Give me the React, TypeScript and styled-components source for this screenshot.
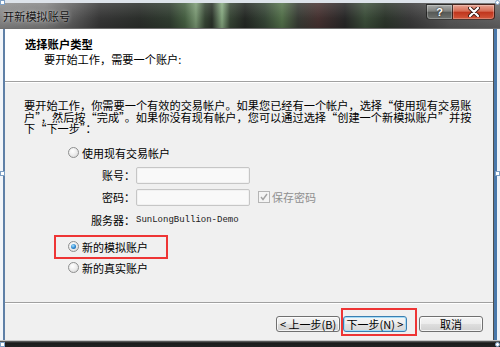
import React from "react";
import styled, { createGlobalStyle, css } from "styled-components";

const GlobalStyle = createGlobalStyle`
  html, body { margin: 0; padding: 0; }
  body {
    width: 500px;
    height: 347px;
    overflow: hidden;
    background: #ffffff;
    font-family: "Noto Sans CJK SC", "Liberation Sans", sans-serif;
  }
`;

const Page = styled.div`
  position: relative;
  width: 500px;
  height: 347px;
  display: flex;
  flex-direction: column;
  overflow: hidden;
  background: #e6ecf3;
`;

const TitleBar = styled.div`
  height: 29px;
  box-sizing: border-box;
  border-top: 3px solid #dde3ea;
  display: flex;
  justify-content: space-between;
  align-items: flex-start;
  padding: 0 5px 0 3px;
  background:
    linear-gradient(180deg, rgba(255, 255, 255, 0.12) 0%, rgba(0, 0, 0, 0.08) 60%, rgba(0, 0, 0, 0.2) 100%),
    linear-gradient(
      90deg,
      #909090 0px,
      #868686 45px,
      #5e5e5e 75px,
      #3a3a3a 100px,
      #2e322e 140px,
      #334033 170px,
      #4a6546 185px,
      #7f9e78 196px,
      #3a4a38 205px,
      #2c342b 212px,
      #8db087 222px,
      #3b4a39 230px,
      #262a26 245px,
      #3a4a3a 265px,
      #58774f 282px,
      #3b3f38 298px,
      #4a3534 318px,
      #2a2a2a 345px,
      #3f523d 365px,
      #2f392e 385px,
      #3d3d3d 410px,
      #5c5c5c 450px,
      #6a6a6a 500px
    );
  box-shadow: inset 0 -1px 0 #6f6f6f;
`;

const Title = styled.div`
  font-size: 11.2px;
  line-height: 26px;
  color: #141414;
  text-shadow: 0 0 5px rgba(255, 255, 255, 0.55), 0 0 2px rgba(255, 255, 255, 0.4);
`;

const CaptionGroup = styled.div`
  display: flex;
  margin-top: 1px;
`;

const CaptionButton = styled.div<{ $kind: "help" | "close" }>`
  height: 16px;
  box-sizing: border-box;
  display: flex;
  align-items: center;
  justify-content: center;
  border: 1px solid rgba(20, 20, 20, 0.75);
  box-shadow: inset 0 0 0 1px rgba(255, 255, 255, 0.25);
  color: #ffffff;
  font-family: "Liberation Sans", sans-serif;
  font-weight: bold;
  font-size: 11px;
  text-shadow: 0 0 2px #000;
  ${(p) =>
    p.$kind === "help"
      ? css`
          width: 26px;
          border-radius: 0 0 0 4px;
          border-right: none;
          background: linear-gradient(180deg, #a9aba9 0%, #80827f 45%, #555855 50%, #6f726f 100%);
        `
      : css`
          width: 43px;
          border-radius: 0 0 4px 0;
          background: linear-gradient(180deg, #e7a392 0%, #d66b53 45%, #bf341c 50%, #d2573b 100%);
        `}
`;

const ClientRow = styled.div`
  flex: 1;
  display: flex;
  min-height: 0;
`;

const LeftEdge = styled.div`
  width: 3px;
  background: #f3f6fa;
  border-right: 2px solid #5f80a7;
`;

const RightEdge = styled.div`
  width: 3px;
  background: #4a78aa;
  border-left: 1px solid #4d4d4d;
  border-right: 3px solid #eef2f7;
`;

const Client = styled.div`
  flex: 1;
  min-width: 0;
  display: flex;
  flex-direction: column;
  background: #f0f0f0;
  color: #000;
`;

const Header = styled.div`
  height: 53px;
  box-sizing: border-box;
  background: #ffffff;
  border-bottom: 1px solid #a0a0a0;
  padding: 8px 0 0 20px;
`;

const HeaderTitle = styled.div`
  font-size: 11.3px;
  font-weight: bold;
  line-height: 14px;
`;

const HeaderSub = styled.div`
  font-size: 11.2px;
  line-height: 14px;
  margin-top: 1px;
  padding-left: 19px;
`;

const Body = styled.div`
  flex: 1;
  border-top: 1px solid #ffffff;
  padding: 17px 0 0 19px;
  display: flex;
  flex-direction: column;
  font-size: 11px;
`;

const Para = styled.p`
  margin: 0;
  font-size: 11.2px;
  line-height: 11.5px;
  white-space: nowrap;
`;

const ParaLine = styled.span`
  display: block;
`;

const OptionRow = styled.div<{ $mt?: number; $ml?: number }>`
  display: flex;
  align-items: center;
  gap: 3px;
  height: 14px;
  margin-top: ${(p) => p.$mt ?? 0}px;
  margin-left: ${(p) => p.$ml ?? 0}px;
  line-height: 14px;
`;

const Radio = styled.span<{ $checked?: boolean }>`
  position: relative;
  flex: none;
  width: 11px;
  height: 11px;
  box-sizing: border-box;
  border-radius: 50%;
  border: 1px solid #8e8f8f;
  background: radial-gradient(circle at 40% 35%, #ffffff 0%, #ececec 50%, #d2d2d2 100%);
  ${(p) =>
    p.$checked &&
    css`
      &::after {
        content: "";
        position: absolute;
        left: 2px;
        top: 2px;
        width: 5px;
        height: 5px;
        border-radius: 50%;
        background: radial-gradient(circle at 40% 35%, #a8e2ff 0%, #2a86d0 55%, #0f4f8c 100%);
      }
    `}
`;

const FieldRow = styled.div<{ $mt: number }>`
  display: flex;
  align-items: center;
  margin-top: ${(p) => p.$mt}px;
  margin-left: 61px;
  line-height: 14px;
`;

const FieldLabel = styled.span`
  flex: none;
  width: 50px;
  text-align: right;
  margin-right: 1px;
`;

const TextBox = styled.div`
  width: 114px;
  height: 17px;
  box-sizing: border-box;
  border: 1px solid #c6c6c6;
  border-radius: 2px;
  background: #f9f9f9;
  box-shadow: inset 0 0 0 1px #f1f1f1;
`;

const CheckWrap = styled.div`
  display: flex;
  align-items: center;
  gap: 2px;
  margin-left: 8px;
  color: #8f8f8f;
`;

const CheckBox = styled.span`
  flex: none;
  width: 12px;
  height: 12px;
  box-sizing: border-box;
  border: 1px solid #b5b5b5;
  background: #f4f4f4;
  display: flex;
  align-items: center;
  justify-content: center;
`;

const ServerValue = styled.span`
  font-family: "Liberation Mono", "DejaVu Sans Mono", monospace;
  font-size: 9px;
  color: #1a1a1a;
`;

const Highlight = styled.div`
  box-sizing: border-box;
  width: 114px;
  height: 24px;
  border: 2px solid #ee3535;
  margin: 8px 0 0 30px;
  padding-left: 12px;
  display: flex;
  align-items: center;
`;

const Footer = styled.div`
  height: 38px;
  box-sizing: border-box;
  border-top: 1px solid #a0a0a0;
  box-shadow: inset 0 1px 0 #ffffff;
  display: flex;
  justify-content: flex-end;
  align-items: flex-start;
  padding: 5px 10px 0 0;
`;

const Button = styled.button<{ $mt: number; $focused?: boolean }>`
  width: 64px;
  height: 16px;
  margin-top: ${(p) => p.$mt}px;
  padding: 0;
  box-sizing: border-box;
  font-family: "Noto Sans CJK SC", "Liberation Sans", sans-serif;
  font-size: 11px;
  line-height: 14px;
  color: #000;
  border: 1px solid #707070;
  border-radius: 3px;
  background: linear-gradient(180deg, #f4f4f4 0%, #ececec 48%, #dedede 52%, #d0d0d0 100%);
  box-shadow: inset 0 0 0 1px rgba(255, 255, 255, 0.75);
  white-space: nowrap;
  ${(p) =>
    p.$focused &&
    css`
      border-color: #3c7fb1;
      box-shadow: inset 0 0 0 1px #a6dcf6;
      background: linear-gradient(180deg, #f6f6f6 0%, #eeeeee 48%, #e2e2e2 52%, #d8d8d8 100%);
    `}
`;

const FooterHighlight = styled.div`
  box-sizing: border-box;
  width: 76px;
  height: 28px;
  border: 2px solid #ee3535;
  margin: 0 2px 0 1px;
`;

const BottomFrame = styled.div`
  height: 7px;
  background: linear-gradient(180deg, #c4c4c4 0px, #c4c4c4 1px, #6a6a6a 1px, #1a1a1a 3px, #232323 7px);
`;

const Handle = styled.span<{ $round?: boolean }>`
  position: absolute;
  width: 5px;
  height: 5px;
  box-sizing: border-box;
  border: 1px solid #7d9fc4;
  background: #ffffff;
  border-radius: ${(p) => (p.$round ? "50%" : "0")};
`;

export default function App() {
  return (
    <>
      <GlobalStyle />
      <Page>
        <TitleBar>
          <Title>开新模拟账号</Title>
          <CaptionGroup>
            <CaptionButton $kind="help">?</CaptionButton>
            <CaptionButton $kind="close">
              <svg width="12" height="10" viewBox="0 0 12 10">
                <path
                  d="M2 1 L10 9 M10 1 L2 9"
                  stroke="#3a1a14"
                  strokeWidth="4"
                  strokeLinecap="round"
                />
                <path
                  d="M2 1 L10 9 M10 1 L2 9"
                  stroke="#ffffff"
                  strokeWidth="2.2"
                  strokeLinecap="round"
                />
              </svg>
            </CaptionButton>
          </CaptionGroup>
        </TitleBar>
        <ClientRow>
          <LeftEdge />
          <Client>
            <Header>
              <HeaderTitle>选择账户类型</HeaderTitle>
              <HeaderSub>要开始工作，需要一个账户:</HeaderSub>
            </Header>
            <Body>
              <Para>
                <ParaLine>要开始工作，你需要一个有效的交易帐户。如果您已经有一个帐户，选择“使用现有交易账</ParaLine>
                <ParaLine>户”，然后按“完成”。如果你没有现有帐户，您可以通过选择“创建一个新模拟账户”并按</ParaLine>
                <ParaLine>下“下一步”：</ParaLine>
              </Para>
              <OptionRow $mt={11} $ml={44}>
                <Radio />
                <span>使用现有交易帐户</span>
              </OptionRow>
              <FieldRow $mt={7}>
                <FieldLabel>账号：</FieldLabel>
                <TextBox />
              </FieldRow>
              <FieldRow $mt={5}>
                <FieldLabel>密码：</FieldLabel>
                <TextBox />
                <CheckWrap>
                  <CheckBox>
                    <svg width="8" height="8" viewBox="0 0 8 8">
                      <path d="M1 4 L3 6.5 L7 1" fill="none" stroke="#a3a3a3" strokeWidth="1.4" />
                    </svg>
                  </CheckBox>
                  <span>保存密码</span>
                </CheckWrap>
              </FieldRow>
              <FieldRow $mt={7}>
                <FieldLabel>服务器：</FieldLabel>
                <ServerValue>SunLongBullion-Demo</ServerValue>
              </FieldRow>
              <Highlight>
                <OptionRow>
                  <Radio $checked />
                  <span>新的模拟账户</span>
                </OptionRow>
              </Highlight>
              <OptionRow $mt={2} $ml={44}>
                <Radio />
                <span>新的真实账户</span>
              </OptionRow>
            </Body>
            <Footer>
              <Button $mt={8}>&lt; 上一步(B)</Button>
              <FooterHighlight>
                <Button $mt={6} $focused>
                  下一步(N) &gt;
                </Button>
              </FooterHighlight>
              <Button $mt={8}>取消</Button>
            </Footer>
          </Client>
          <RightEdge />
        </ClientRow>
        <BottomFrame />
        <Handle style={{ left: 0, top: 0 }} />
        <Handle $round style={{ left: 495, top: 0 }} />
        <Handle style={{ left: 0, top: 171 }} />
        <Handle style={{ left: 495, top: 171 }} />
        <Handle style={{ left: 0, top: 342 }} />
        <Handle $round style={{ left: 495, top: 342 }} />
      </Page>
    </>
  );
}
